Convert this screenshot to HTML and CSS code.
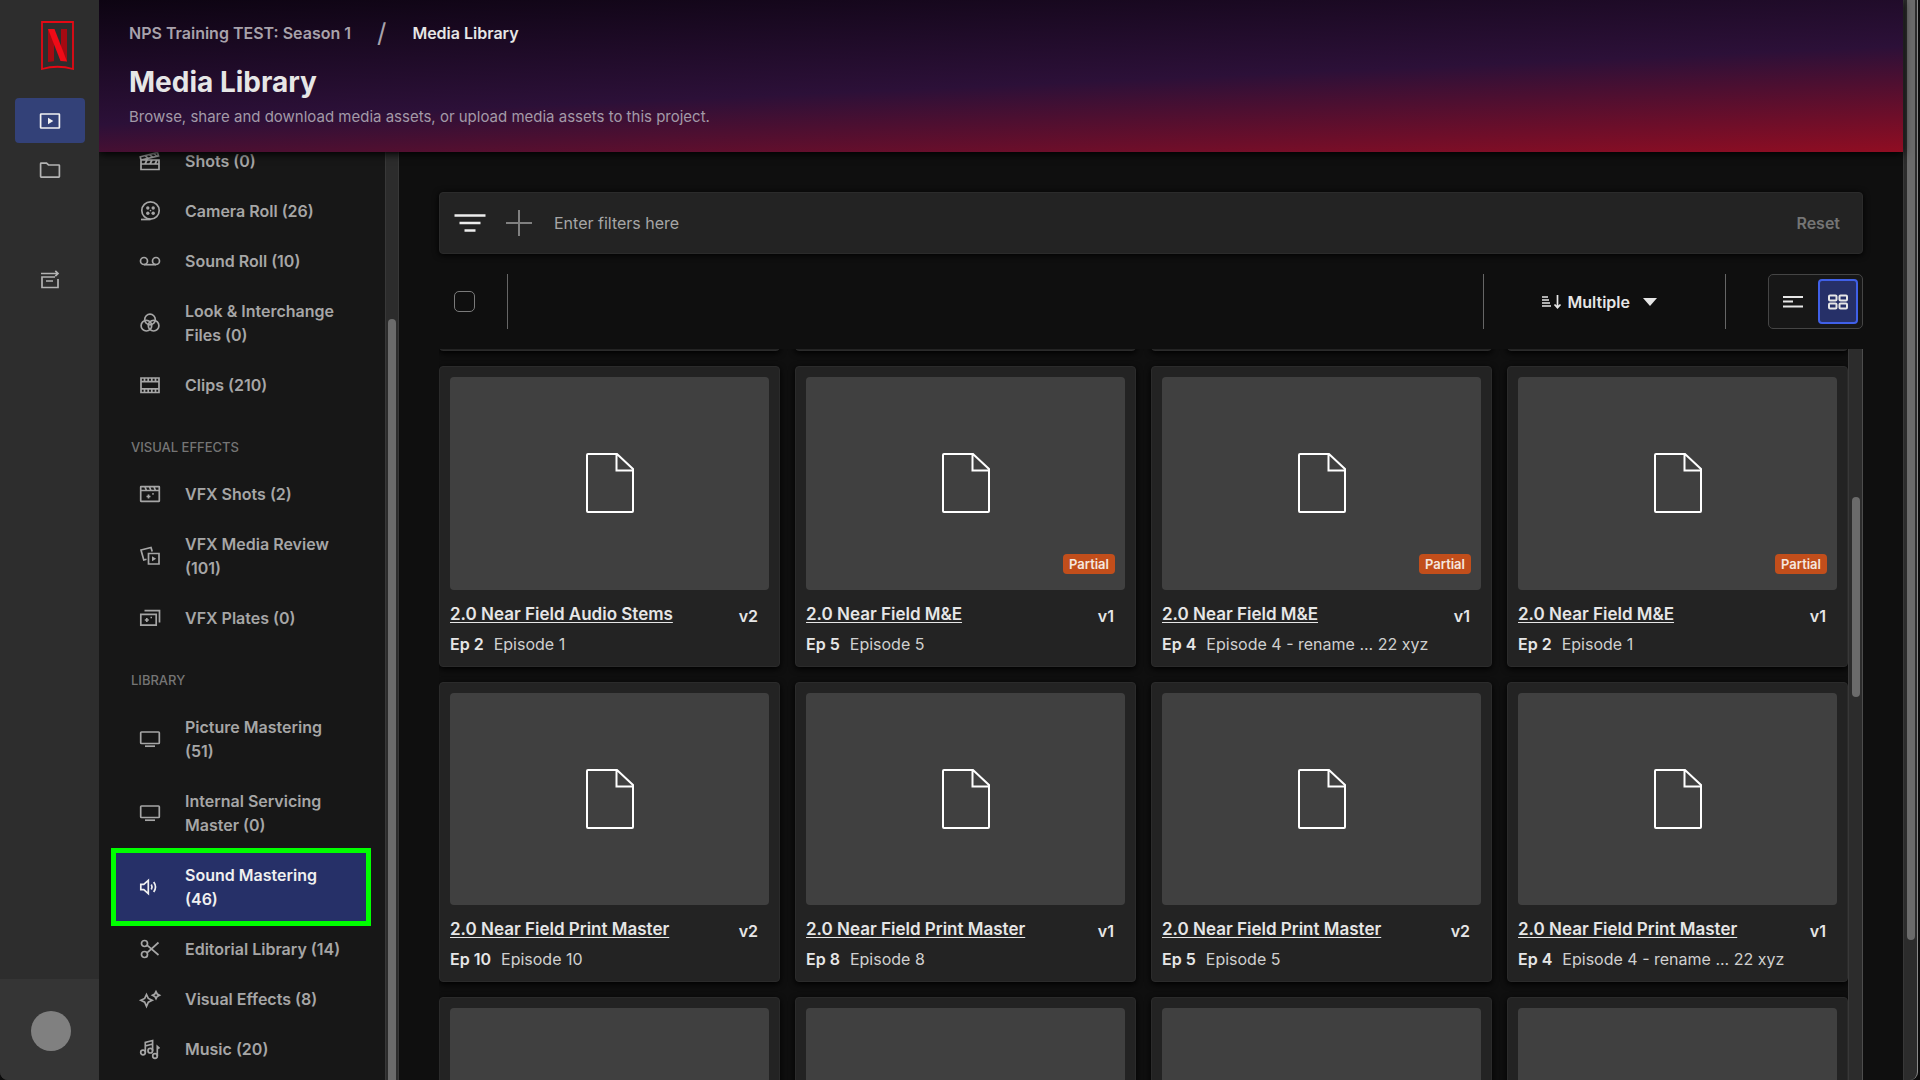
FILE: index.html
```html
<!DOCTYPE html>
<html lang="en">
<head>
<meta charset="utf-8">
<meta name="viewport" content="width=device-width, initial-scale=1">
<title>Media Library</title>
<link rel="stylesheet" href="styles.css">
</head>
<body>
<svg class="sprite" aria-hidden="true">
  <symbol id="i-file" viewBox="0 0 48 60"><path d="M2 1H31L47 16V58Q47 59 46 59H2Q1 59 1 58V2Q1 1 2 1ZM30.500 1V17.500H47"/></symbol>
  <symbol id="i-shots" viewBox="0 0 24 24"><path d="M3 11H21V20.500H3ZM3 15H21M7 15L9 11M12 15L14 11M17 15L19 11M3 11L2.300 7.800L19.500 3.500L20.500 6.800L3 11M7 6.700L10 9.200M11.500 5.600L14.500 8M16 4.500L18.500 7"/></symbol>
  <symbol id="i-reel" viewBox="0 0 24 24"><circle cx="12.500" cy="11.500" r="8.700"/><path d="M3 20.500H12.500"/><g class="solid"><circle cx="9.800" cy="9" r="1.700"/><circle cx="15.200" cy="9" r="1.700"/><circle cx="9.800" cy="14.200" r="1.700"/><circle cx="15.200" cy="14.200" r="1.700"/><circle cx="12.500" cy="11.600" r=".8"/></g></symbol>
  <symbol id="i-tape" viewBox="0 0 24 24"><circle cx="6" cy="12" r="3.500"/><circle cx="18" cy="12" r="3.500"/><path d="M6 15.700H18"/></symbol>
  <symbol id="i-look" viewBox="0 0 24 24"><circle cx="12" cy="8.500" r="5.300"/><circle cx="8.400" cy="14.700" r="5.300"/><circle cx="15.600" cy="14.700" r="5.300"/></symbol>
  <symbol id="i-clips" viewBox="0 0 24 24"><path d="M3 5H21V19.500H3ZM3 8.700H21M3 15.800H21M6.500 5V8.700M10.200 5V8.700M13.800 5V8.700M17.500 5V8.700M6.500 15.800V19.500M10.200 15.800V19.500M13.800 15.800V19.500M17.500 15.800V19.500"/></symbol>
  <symbol id="i-vfxshots" viewBox="0 0 24 24"><path d="M3 4.700H21Q21.300 4.700 21.300 5V19Q21.300 19.300 21 19.300H3Q2.700 19.300 2.700 19V5Q2.700 4.700 3 4.700ZM3 8.500H21M7 5L8.500 8.500M11.500 5L13 8.500M16 5L17.500 8.500M10.500 12.500V16.500M8.500 14.500H12.500M14.300 11.800H15.700"/></symbol>
  <symbol id="i-review" viewBox="0 0 24 24"><path d="M10.500 9.500H21V20H10.500ZM8.500 15.200L5.800 16L3 6L13 3.500L14.200 7.500"/><path class="solid" d="M14 12.300V17.200L18.200 14.750Z"/></symbol>
  <symbol id="i-plates" viewBox="0 0 24 24"><path d="M2.800 8.300H18.200V19.200H2.800ZM6.500 4.700H21.500V16.500M8.800 12V16M6.800 14H10.800M12.500 11.500H14"/></symbol>
  <symbol id="i-screen" viewBox="0 0 24 24"><rect x="2.700" y="5" width="18.600" height="11.500" rx=".8"/><path d="M7 19.200H17"/></symbol>
  <symbol id="i-sound" viewBox="0 0 24 24"><path d="M2.800 9.300H5.800L10.300 5.300V18.700L5.800 14.700H2.800ZM13.300 9.500Q14.800 12 13.300 14.500M15.700 7Q19.300 12 15.700 17"/></symbol>
  <symbol id="i-cut" viewBox="0 0 24 24"><circle cx="6.500" cy="6.500" r="3"/><circle cx="6.500" cy="17.500" r="3"/><path d="M9 8.200L20.500 18M9 15.800L20.500 5.500"/></symbol>
  <symbol id="i-spark" viewBox="0 0 24 24"><path d="M8.500 7.500L10.300 11.400L14.200 13.300L10.300 15.200L8.500 19.300L6.700 15.200L2.800 13.300L6.700 11.400ZM18 4.700L19.200 7L21.500 8.200L19.200 9.400L18 11.700L16.800 9.400L14.500 8.200L16.800 7Z"/></symbol>
  <symbol id="i-music" viewBox="0 0 24 24"><circle cx="5" cy="15.500" r="2.300"/><circle cx="12.300" cy="13.700" r="2.300"/><circle cx="17" cy="19" r="2.300"/><path d="M7.300 15.500V5.500L14.600 3.500V13.700M7.300 9L14.600 7M19.300 19V9.500L21.500 11.500"/></symbol>
  <symbol id="i-play" viewBox="0 0 24 24"><rect x="2.600" y="5" width="18.800" height="14" rx=".6"/><path class="solid" d="M10 8.800V15.200L15.300 12Z"/></symbol>
  <symbol id="i-folder" viewBox="0 0 24 24"><path d="M2.600 18.500V5.800Q2.600 5.200 3.200 5.200H8.500L10.500 7H20.800Q21.400 7 21.400 7.600V18.500Q21.400 19.100 20.800 19.100H3.200Q2.600 19.100 2.600 18.500Z"/></symbol>
  <symbol id="i-send" viewBox="0 0 24 24"><path d="M3 5.500H20M17.300 2.800L20 5.500L17.300 8.200M17 9H4V19.500H20V11M8 13H15"/></symbol>
</svg>

<div class="app">
  <nav class="rail" aria-label="Main">
    <a class="logo" href="#" aria-label="Home">
      <svg viewBox="0 0 33 49"><path d="M1 1H32V48Q16.500 43.500 1 48Z" fill="none" stroke="#e50914" stroke-width="1.800"/><path d="M7 8H13V40.300L7 41ZM20 8H26V40.500L20 39Z" fill="#a50a12"/><path d="M7 8H13.500L26 40.500L19.500 40Z" fill="#f00b17"/></svg>
    </a>
    <a class="rail-link active" href="#" aria-label="Media"><svg class="icon"><use href="#i-play"/></svg></a>
    <a class="rail-link" href="#" aria-label="Files"><svg class="icon"><use href="#i-folder"/></svg></a>
    <a class="rail-link spaced" href="#" aria-label="Transfers"><svg class="icon"><use href="#i-send"/></svg></a>
    <div class="account"><button class="avatar" aria-label="Account"></button></div>
  </nav>

  <div class="page">
    <header class="banner">
      <div class="crumbs"><a href="#">NPS Training TEST: Season 1</a><span class="slash">/</span><span class="here">Media Library</span></div>
      <h1>Media Library</h1>
      <p>Browse, share and download media assets, or upload media assets to this project.</p>
    </header>

    <div class="body">
      <aside class="side">
        <nav class="menu" aria-label="Library sections">
          <a class="item" href="#"><svg class="icon"><use href="#i-shots"/></svg><span>Shots (0)</span></a>
          <a class="item" href="#"><svg class="icon"><use href="#i-reel"/></svg><span>Camera Roll (26)</span></a>
          <a class="item" href="#"><svg class="icon"><use href="#i-tape"/></svg><span>Sound Roll (10)</span></a>
          <a class="item" href="#"><svg class="icon"><use href="#i-look"/></svg><span>Look &amp; Interchange Files (0)</span></a>
          <a class="item" href="#"><svg class="icon"><use href="#i-clips"/></svg><span>Clips (210)</span></a>
          <h2>VISUAL EFFECTS</h2>
          <a class="item" href="#"><svg class="icon"><use href="#i-vfxshots"/></svg><span>VFX Shots (2)</span></a>
          <a class="item" href="#"><svg class="icon"><use href="#i-review"/></svg><span>VFX Media Review (101)</span></a>
          <a class="item" href="#"><svg class="icon"><use href="#i-plates"/></svg><span>VFX Plates (0)</span></a>
          <h2>LIBRARY</h2>
          <a class="item" href="#"><svg class="icon"><use href="#i-screen"/></svg><span>Picture Mastering (51)</span></a>
          <a class="item" href="#"><svg class="icon"><use href="#i-screen"/></svg><span>Internal Servicing Master (0)</span></a>
          <a class="item current" href="#" aria-current="page"><svg class="icon"><use href="#i-sound"/></svg><span>Sound Mastering (46)</span></a>
          <a class="item" href="#"><svg class="icon"><use href="#i-cut"/></svg><span>Editorial Library (14)</span></a>
          <a class="item" href="#"><svg class="icon"><use href="#i-spark"/></svg><span>Visual Effects (8)</span></a>
          <a class="item" href="#"><svg class="icon"><use href="#i-music"/></svg><span>Music (20)</span></a>
        </nav>
        <div class="track side-track"><div class="thumb"></div></div>
      </aside>

      <main class="main">
        <div class="filters">
          <svg class="filter-icon" viewBox="0 0 32 20"><path d="M0.500 2.500H31.500M5.500 10H26.500M10.500 17.500H21.500"/></svg>
          <button class="add" aria-label="Add filter"><svg viewBox="0 0 26 26"><path d="M0 13H26M13 0V26"/></svg></button>
          <input class="filter-input" type="text" placeholder="Enter filters here" aria-label="Filters">
          <button class="reset">Reset</button>
        </div>

        <div class="tools">
          <label class="check"><input type="checkbox" aria-label="Select all"></label>
          <span class="rule"></span>
          <span class="fill"></span>
          <span class="rule"></span>
          <button class="sort">
            <svg class="sort-icon" viewBox="0 0 20 16"><path d="M0 3H6M0 6H7M0 9H8M0 12H9"/><path d="M15.500 1V13.500M12.500 10.500L15.500 13.700L18.500 10.500"/></svg>
            <span>Multiple</span>
            <svg class="caret" viewBox="0 0 14 8"><path d="M0 0H14L7 8Z"/></svg>
          </button>
          <span class="rule"></span>
          <div class="toggle">
            <button aria-label="List view"><svg viewBox="0 0 22 16"><path d="M1 3H21M1 7.500H11M1 12.500H21"/></svg></button>
            <button class="on" aria-label="Grid view"><svg viewBox="0 0 22 16"><rect x="2" y="1.500" width="7.500" height="5" rx="1"/><rect x="12.500" y="1.500" width="7.500" height="5" rx="1"/><rect x="2" y="9.500" width="7.500" height="5" rx="1"/><rect x="12.500" y="9.500" width="7.500" height="5" rx="1"/></svg></button>
          </div>
        </div>

        <section class="results" aria-label="Assets">
          <div class="view">
            <div class="grid previous"><div class="card"></div><div class="card"></div><div class="card"></div><div class="card"></div></div>
            <div class="grid">
              <article class="card">
                <div class="preview"><svg><use href="#i-file"/></svg></div>
                <div class="name"><a href="#">2.0 Near Field Audio Stems</a><span class="version">v2</span></div>
                <div class="episode"><b>Ep 2</b><span>Episode 1</span></div>
              </article>
              <article class="card">
                <div class="preview"><svg><use href="#i-file"/></svg><span class="badge">Partial</span></div>
                <div class="name"><a href="#">2.0 Near Field M&amp;E</a><span class="version">v1</span></div>
                <div class="episode"><b>Ep 5</b><span>Episode 5</span></div>
              </article>
              <article class="card">
                <div class="preview"><svg><use href="#i-file"/></svg><span class="badge">Partial</span></div>
                <div class="name"><a href="#">2.0 Near Field M&amp;E</a><span class="version">v1</span></div>
                <div class="episode"><b>Ep 4</b><span>Episode 4 - rename ... 22 xyz</span></div>
              </article>
              <article class="card">
                <div class="preview"><svg><use href="#i-file"/></svg><span class="badge">Partial</span></div>
                <div class="name"><a href="#">2.0 Near Field M&amp;E</a><span class="version">v1</span></div>
                <div class="episode"><b>Ep 2</b><span>Episode 1</span></div>
              </article>
              <article class="card">
                <div class="preview"><svg><use href="#i-file"/></svg></div>
                <div class="name"><a href="#">2.0 Near Field Print Master</a><span class="version">v2</span></div>
                <div class="episode"><b>Ep 10</b><span>Episode 10</span></div>
              </article>
              <article class="card">
                <div class="preview"><svg><use href="#i-file"/></svg></div>
                <div class="name"><a href="#">2.0 Near Field Print Master</a><span class="version">v1</span></div>
                <div class="episode"><b>Ep 8</b><span>Episode 8</span></div>
              </article>
              <article class="card">
                <div class="preview"><svg><use href="#i-file"/></svg></div>
                <div class="name"><a href="#">2.0 Near Field Print Master</a><span class="version">v2</span></div>
                <div class="episode"><b>Ep 5</b><span>Episode 5</span></div>
              </article>
              <article class="card">
                <div class="preview"><svg><use href="#i-file"/></svg></div>
                <div class="name"><a href="#">2.0 Near Field Print Master</a><span class="version">v1</span></div>
                <div class="episode"><b>Ep 4</b><span>Episode 4 - rename ... 22 xyz</span></div>
              </article>
              <article class="card"><div class="preview"></div></article>
              <article class="card"><div class="preview"></div></article>
              <article class="card"><div class="preview"></div></article>
              <article class="card"><div class="preview"></div></article>
            </div>
          </div>
          <div class="track grid-track"><div class="thumb"></div></div>
        </section>
      </main>
    </div>
  </div>
  <div class="track page-track"><div class="thumb"></div></div>
</div>
</body>
</html>
```
FILE: styles.css
```css
* { box-sizing: border-box; }

body {
  margin: 0;
  background: #0c0c0c;
  color: #e6e6e6;
  font: 400 16px/24px Inter, "Liberation Sans", sans-serif;
}

a { color: inherit; text-decoration: none; }

button {
  margin: 0;
  padding: 0;
  border: 0;
  background: none;
  color: inherit;
  font: inherit;
}

svg { display: block; flex: none; fill: none; stroke: currentColor; }

.sprite { display: none; }
.solid { fill: currentColor; stroke: none; }
.icon { width: 24px; height: 24px; stroke-width: 1.7; }

.app {
  display: flex;
  height: 100vh;
  padding-right: 2px;
  overflow: hidden;
}

/* Left rail */
.rail {
  position: relative;
  z-index: 2;
  display: flex;
  flex: none;
  flex-direction: column;
  align-items: center;
  width: 99px;
  padding-top: 21px;
  background: #2d2d2d;
  border-bottom-left-radius: 8px;
  overflow: hidden;
  color: #b3b3b3;
}

.logo { padding-left: 16px; margin-bottom: 28px; }
.logo svg { width: 33px; height: 49px; stroke: none; }

.rail-link {
  display: flex;
  align-items: center;
  justify-content: center;
  width: 70px;
  height: 45px;
  margin-bottom: 4px;
  border-radius: 4px;
}

.rail-link.active { background: #334178; color: #f2f2f2; }
.rail-link.spaced { margin-top: 61px; }

.account {
  display: flex;
  justify-content: center;
  width: 100%;
  margin-top: auto;
  padding: 32px 0 29px 3px;
  background: #353535;
}

.avatar { width: 40px; height: 40px; border-radius: 50%; background: #808080; }

/* Page column */
.page { display: flex; flex: 1; flex-direction: column; min-width: 0; }

.banner {
  position: relative;
  z-index: 1;
  padding: 21px 30px 23px;
  background: linear-gradient(177.5deg, #0d0412 0%, #2c1038 54%, #900d22 100%);
  box-shadow: 0 2px 8px #000;
}

.crumbs {
  display: flex;
  gap: 26px;
  margin-bottom: 20px;
  color: #a8a2ab;
  font-weight: 600;
}

.slash { font-size: 26px; font-weight: 400; }
.here { color: #e6e6e6; }
.banner h1 { margin: 0 0 6px; font-size: 28px; font-weight: 700; line-height: 34px; }
.banner p { margin: 0; color: #a39aa8; font-size: 15px; }

.body { display: flex; flex: 1; min-height: 0; }

/* Scroll tracks */
.track {
  flex: none;
  width: 15px;
  background: #2c2c2c;
  border: solid #383838;
  border-width: 0 1px;
}

.thumb { width: 8px; margin: 0 auto; border-radius: 4px; background: #6b6b6b; }
.side-track { display: flex; flex-direction: column; justify-content: flex-end; width: 14px; }
.side-track .thumb { height: 82%; border-radius: 4px 4px 0 0; }
.grid-track { display: flex; flex-direction: column; border-right-color: #4d4d4d; }
.grid-track::before { content: ""; flex: 148; }
.grid-track::after { content: ""; flex: 383; }
.grid-track .thumb { flex: 200; }
.page-track { border-right-color: #8a8a8a; border-bottom-right-radius: 8px; }
.page-track .thumb { height: 87%; border-radius: 0 0 4px 4px; }

/* Section menu */
.side { display: flex; flex: none; width: 300px; overflow: hidden; background: #171717; }

.menu {
  flex: 1;
  margin-top: -16px;
  padding: 0 16px 0 14px;
  color: #a6a6a6;
  font-weight: 600;
}

.item {
  display: flex;
  align-items: center;
  gap: 23px;
  padding: 13px 16px 13px 25px;
}

.item.current {
  background: #263068;
  color: #f0f0f0;
  outline: 5px solid #00ff00;
  outline-offset: -3px;
}

.menu h2 {
  margin: 0;
  padding: 27px 0 12px 18px;
  color: #757575;
  font-size: 13px;
  font-weight: 500;
  line-height: 20px;
}

/* Main area */
.main {
  display: flex;
  flex: 1;
  flex-direction: column;
  gap: 20px;
  min-width: 0;
  padding: 40px 40px 0;
  background: #0f0f0f;
}

.filters {
  display: flex;
  align-items: center;
  padding: 17px 22px 17px 14px;
  border: 1px solid #2b2b2b;
  border-radius: 4px;
  background: #232323;
  box-shadow: 0 1px 6px #000;
}

.filter-icon { width: 32px; height: 20px; color: #ededed; stroke-width: 2.5; }
.add { margin: 0 22px 0 20px; color: #808080; }
.add svg { width: 26px; height: 26px; stroke-width: 2; }

.filter-input {
  flex: 1;
  min-width: 0;
  height: 24px;
  padding: 0;
  border: 0;
  outline: 0;
  background: none;
  color: #e6e6e6;
  font: inherit;
}

.filter-input::placeholder { color: #a6a6a6; opacity: 1; }
.reset { color: #757575; font-weight: 600; }

.tools { display: flex; align-items: center; height: 55px; padding-left: 15px; }
.check { display: flex; margin-right: 32px; }

.check input {
  appearance: none;
  width: 21px;
  height: 21px;
  margin: 0;
  border: 1px solid #7a7a7a;
  border-radius: 5px;
}

.rule { align-self: stretch; width: 1px; background: #666; }
.fill { flex: 1; }

.sort {
  display: flex;
  align-items: center;
  margin: 0 68px 0 58px;
  font-weight: 600;
}

.sort-icon { width: 20px; height: 16px; margin-right: 6px; stroke-width: 1.7; }
.caret { width: 14px; height: 8px; margin-left: 13px; fill: currentColor; stroke: none; }

.toggle {
  display: flex;
  align-self: stretch;
  gap: 5px;
  margin-left: 42px;
  padding: 4px;
  border: 1px solid #454545;
  border-radius: 5px;
  background: #171717;
}

.toggle button {
  display: flex;
  align-items: center;
  justify-content: center;
  width: 40px;
  border-radius: 4px;
}

.toggle svg { width: 22px; height: 16px; stroke-width: 2; }
.toggle .on { border: 2px solid #4060e8; background: #263068; }

.results { display: flex; flex: 1; min-height: 0; }
.view { flex: 1; min-width: 0; overflow: hidden; }

.grid { display: grid; grid-template-columns: repeat(4, 1fr); gap: 15px; }

.card {
  min-width: 0;
  padding: 10px;
  border: 1px solid #2b2b2b;
  border-radius: 4px;
  background: #232323;
  box-shadow: 0 2px 6px #000;
}

/* Bottom edges of the row that has been scrolled past */
.previous { margin: -8px 0 15px; }
.previous .card { height: 10px; padding: 0; }

.preview {
  position: relative;
  display: flex;
  align-items: center;
  justify-content: center;
  aspect-ratio: 3 / 2;
  margin-bottom: 12px;
  border-radius: 4px;
  background: #404040;
}

.preview svg { width: 48px; height: 60px; color: #fff; stroke-width: 2; }

.badge {
  position: absolute;
  right: 10px;
  bottom: 16px;
  padding: 0 6px;
  border-radius: 4px;
  background: #c24e1b;
  color: #f5e6df;
  font-size: 13px;
  font-weight: 600;
  line-height: 20px;
}

.name {
  display: flex;
  justify-content: space-between;
  margin-bottom: 2px;
  padding-right: 11px;
  font-weight: 600;
}

.name a { font-size: 17px; text-decoration: underline; text-underline-offset: 2px; }
.version { line-height: 28px; }
.episode { display: flex; gap: 10px; color: #d0d0d0; }
.episode b { color: #e6e6e6; font-weight: 600; }
```
